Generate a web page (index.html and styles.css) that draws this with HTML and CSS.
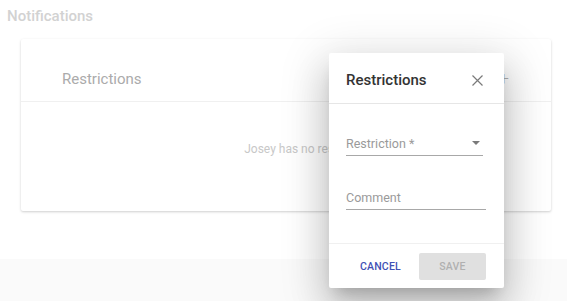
FILE: index.html
```html
<!DOCTYPE html>
<html lang="en">
<head>
    <meta charset="UTF-8">
    <title>Restrictions</title>
    <link rel="stylesheet" href="styles.css">
</head>
<body>
    <div class="page">
        <h2 class="section-title">Notifications</h2>
        <div class="card">
            <div class="card-header">
                <span class="card-title">Restrictions</span>
                <span class="add">+</span>
            </div>
            <div class="card-body">
                <p class="empty">Josey has no restrictions</p>
            </div>
        </div>
    </div>
    <div class="footer-strip"></div>

    <div class="dialog">
        <div class="dialog-header">
            <span class="dialog-title">Restrictions</span>
            <svg class="close" width="11" height="11" viewBox="0 0 11 11">
                <path d="M0.5 0.5 L10.5 10.5 M10.5 0.5 L0.5 10.5" stroke="#7a7a7a" stroke-width="1.2" fill="none"/>
            </svg>
        </div>
        <div class="dialog-body">
            <div class="field select-field">
                <span class="field-label">Restriction *</span>
                <svg class="caret" width="8" height="4" viewBox="0 0 8 4"><path d="M0 0 L8 0 L4 4 Z" fill="#7a7a7a"/></svg>
            </div>
            <div class="field comment-field">
                <span class="field-label">Comment</span>
            </div>
        </div>
        <div class="dialog-footer">
            <button class="btn-cancel">CANCEL</button>
            <button class="btn-save" disabled>SAVE</button>
        </div>
    </div>
</body>
</html>
```

FILE: styles.css
```css
body {
    margin: 0;
    font-family: Roboto, "Liberation Sans", sans-serif;
    background: #ffffff;
    height: 301px;
    overflow: hidden;
    position: relative;
}
.page {
    padding: 0 16px 0 0;
    height: 259px;
}
.section-title {
    margin: 0;
    padding: 7px 0 0 7px;
    font-size: 15px;
    font-weight: 500;
    color: #d2d2d2;
    line-height: 18px;
}
.card {
    margin: 14px 0 0 21px;
    width: 530px;
    height: 172px;
    background: #fff;
    border-radius: 2px;
    box-shadow: 0 1px 3px rgba(0,0,0,0.12), 0 1px 2px rgba(0,0,0,0.08);
}
.card-header {
    height: 63px;
    border-bottom: 1px solid #f0f0f0;
    display: flex;
    align-items: center;
    justify-content: space-between;
    padding: 0 42px 0 41px;
    box-sizing: border-box;
}
.card-title {
    font-size: 15px;
    color: #ababab;
    padding-top: 17px;
}
.add {
    font-size: 18px;
    font-weight: 300;
    color: #b0b0b0;
    padding-top: 17px;
}
.card-body {
    display: flex;
    justify-content: center;
}
.empty {
    margin: 40px 0 0 0;
    padding-left: 50px;
    font-size: 12px;
    color: #c8c8c8;
}
.footer-strip {
    height: 42px;
    background: #fafafa;
}
.dialog {
    position: absolute;
    left: 329px;
    top: 53px;
    width: 175px;
    height: 235px;
    background: #fff;
    border-radius: 2px;
    box-shadow: 0 11px 15px -7px rgba(0,0,0,0.2), 0 24px 38px 3px rgba(0,0,0,0.14), 0 9px 46px 8px rgba(0,0,0,0.12);
    display: flex;
    flex-direction: column;
}
.dialog-header {
    height: 50px;
    border-bottom: 1px solid #e6e6e6;
    display: flex;
    align-items: center;
    justify-content: space-between;
    padding: 0 21px 0 17px;
}
.dialog-title {
    font-size: 15px;
    font-weight: 500;
    color: #333;
    padding-top: 4px;
}
.close {
    margin-top: 4px;
}
.dialog-body {
    height: 139px;
    padding: 0 18px 0 17px;
}
.field {
    display: flex;
    align-items: center;
    justify-content: space-between;
    border-bottom: 1px solid #a8a8a8;
    height: 20px;
    padding-bottom: 2px;
}
.select-field {
    margin-top: 29px;
    margin-right: 3px;
}
.comment-field {
    margin-top: 31px;
}
.field-label {
    font-size: 12.5px;
    color: #9a9a9a;
}
.caret {
    margin-right: 3px;
}
.dialog-footer {
    border-top: 1px solid #f0f0f0;
    flex: 1;
    display: flex;
    align-items: center;
    padding: 0 18px 0 22px;
    justify-content: space-between;
}
.btn-cancel, .btn-save {
    font-family: Roboto, "Liberation Sans", sans-serif;
    font-size: 10.5px;
    font-weight: 500;
    border: none;
    border-radius: 2px;
    height: 27px;
    letter-spacing: 0.2px;
}
.btn-cancel {
    background: none;
    color: #3f51b5;
    padding: 0 10px;
    margin-left: -1px;
}
.btn-save {
    width: 67px;
    background: #e0e0e0;
    color: #b0b0b0;
}
```
